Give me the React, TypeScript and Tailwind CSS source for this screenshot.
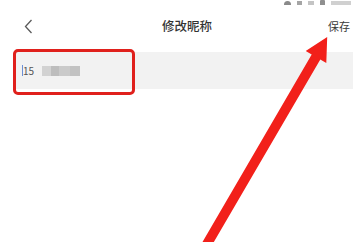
import React from 'react';

const cjk = { fontFamily: '"Noto Sans CJK SC", "Noto Sans", sans-serif' };

const App: React.FC = () => {
  return (
    <div className="relative w-[353px] h-[242px] overflow-hidden bg-white" style={cjk}>
      {/* status bar, mostly cut off at the top */}
      <div className="h-[5px] overflow-hidden flex justify-end items-end gap-[6px] pr-[2px]">
        <div className="w-[7px] h-[7px] rounded-full bg-[#8a8a8a] mb-[-3px]" />
        <div className="w-[5px] h-[6px] bg-[#a5a5a5] mb-[-2px]" />
        <div className="w-[6px] h-[6px] bg-[#c4c4c4] mb-[-2px]" />
        <div className="w-[5px] h-[8px] rounded-[1px] bg-[#8f8f8f] mb-[-3px]" />
        <div className="w-[20px] h-[6px] bg-[#d0d0d0] mb-[-2px]" />
      </div>

      {/* header */}
      <div className="h-[42px] flex items-center pl-[24px] pr-[3px]">
        <svg width="9" height="15" viewBox="0 0 9 15" className="shrink-0">
          <path d="M7.5 1 L1.5 7.5 L7.5 14" fill="none" stroke="#5a5a5a" strokeWidth="1.3" />
        </svg>
        <span className="ml-[129px] text-[12.5px] font-medium text-[#333]">修改昵称</span>
        <span className="ml-auto text-[11px] text-[#3a3a3a]">保存</span>
      </div>

      {/* nickname input row */}
      <div className="mt-[5px] ml-[15px] h-[37px] bg-[#f2f2f2] flex items-center pl-[7px]">
        <div className="w-[1px] h-[11px] bg-[#6b8fd6]" />
        <span className="text-[10px] text-[#555] leading-none">15</span>
        <div className="ml-[8px] flex h-[10px]">
          <div className="w-[9px] bg-[#d2d2d2]" />
          <div className="w-[8px] bg-[#bdbdbd]" />
          <div className="w-[11px] bg-[#cacaca]" />
          <div className="w-[10px] bg-[#c2c2c2]" />
        </div>
      </div>

      {/* red annotation box */}
      <div className="absolute left-[13px] top-[49px] w-[122px] h-[46px] border-[3px] border-[#e0201c] rounded-[5px]" />

      {/* red annotation arrow */}
      <svg className="absolute left-0 top-0" width="353" height="242" viewBox="0 0 353 242">
        <polygon
          points="199,248 311.7,54.5 305.7,50.9 327.2,37 326.3,63.1 320.3,59.5 208,252"
          fill="#f2201a"
        />
      </svg>
    </div>
  );
};

export default App;
